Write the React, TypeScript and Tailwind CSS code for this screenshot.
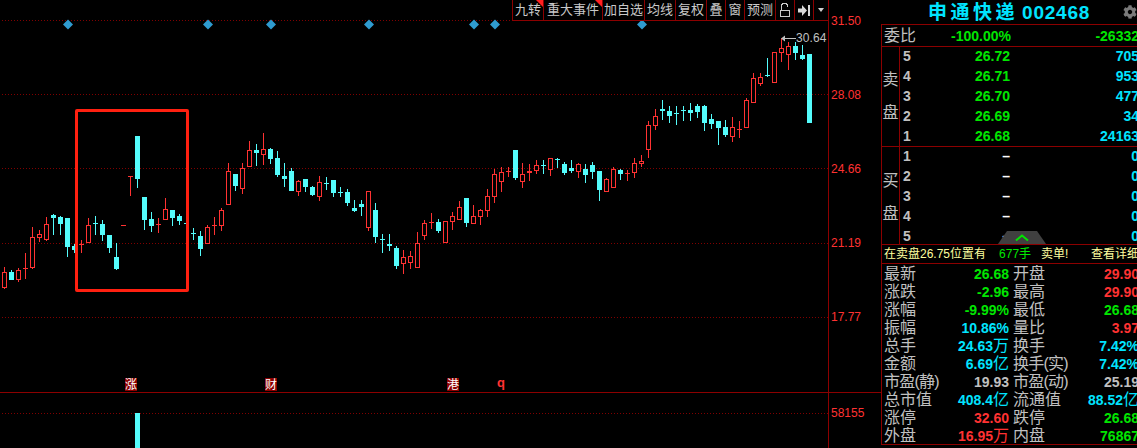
import { FaCog } from 'react-icons/fa'

const RED = '#ff3232'
const CYAN = '#54fcfc'

// kind, high, low, top, bottom — measured on 3x crops, y = origin + value / 3
type Raw = ['r' | 'c', number, number, number, number]

const toPixels = (origin: number, rows: Raw[]) =>
  rows.map(([kind, hi, lo, top, bot]) => ({
    kind,
    hi: Math.round(origin + hi / 3),
    lo: Math.round(origin + lo / 3),
    top: Math.round(origin + top / 3),
    bot: Math.round(origin + bot / 3),
  }))

const candles = [
  ...toPixels(100, [
    ['r', 502, 566, 517, 560], ['c', 511, 540, 516, 540], ['r', 505, 545, 511, 536], ['r', 460, 537, 505, 505],
    ['r', 381, 507, 412, 500], ['r', 391, 426, 403, 410], ['r', 351, 423, 373, 416], ['c', 343, 405, 345, 354],
    ['c', 348, 405, 351, 372], ['c', 354, 471, 354, 441], ['c', 432, 459, 438, 450], ['r', 420, 459, 433, 433],
    ['r', 354, 426, 376, 426], ['c', 348, 405, 370, 370], ['c', 360, 423, 372, 405], ['c', 405, 459, 405, 444],
    ['c', 429, 510, 471, 507], ['r', 376, 376, 376, 376], ['r', 229, 288, 229, 229], ['c', 108, 264, 108, 237],
    ['c', 291, 390, 291, 360], ['c', 336, 396, 357, 378], ['r', 354, 399, 373, 373], ['r', 294, 357, 328, 357],
    ['c', 330, 378, 330, 354], ['c', 342, 375, 348, 363], ['c', 370, 370, 370, 370], ['c', 384, 420, 399, 399],
    ['c', 393, 468, 408, 447], ['r', 376, 429, 382, 429], ['r', 351, 405, 376, 376], ['r', 324, 393, 331, 375],
    ['r', 189, 312, 214, 312], ['c', 222, 273, 222, 258], ['r', 189, 282, 205, 264], ['r', 123, 198, 151, 198],
    ['c', 132, 198, 150, 159],
  ]),
  ...toPixels(120, [
    ['r', 39, 135, 88, 101], ['c', 84, 132, 88, 117], ['c', 93, 171, 114, 165], ['c', 129, 201, 168, 177],
    ['c', 144, 213, 153, 213], ['r', 180, 228, 184, 212], ['c', 177, 216, 177, 201], ['c', 198, 228, 201, 225],
    ['r', 168, 243, 187, 228], ['c', 171, 210, 189, 189], ['c', 180, 231, 180, 219], ['c', 201, 231, 216, 216],
    ['c', 207, 258, 216, 249], ['c', 240, 276, 264, 273], ['c', 240, 288, 252, 261], ['r', 213, 333, 214, 320],
    ['c', 249, 369, 270, 351], ['c', 342, 399, 357, 357], ['c', 342, 393, 372, 378], ['c', 378, 447, 384, 438],
    ['r', 390, 462, 412, 429], ['r', 393, 447, 409, 425], ['r', 336, 441, 370, 441], ['r', 300, 360, 310, 344],
    ['r', 279, 327, 307, 307], ['c', 297, 339, 306, 333], ['r', 304, 365, 304, 365], ['r', 276, 330, 289, 302],
    ['r', 243, 300, 262, 296], ['c', 234, 321, 234, 309], ['r', 255, 312, 289, 309], ['r', 267, 315, 271, 287],
    ['r', 207, 291, 229, 269],
  ]),
  ...toPixels(90, [
    ['r', 237, 339, 253, 317], ['r', 231, 306, 247, 272], ['r', 231, 261, 244, 244], ['c', 180, 270, 180, 264],
    ['r', 219, 294, 253, 272], ['r', 222, 273, 243, 247], ['r', 210, 252, 226, 241], ['c', 210, 252, 226, 226],
    ['r', 203, 258, 205, 238], ['c', 204, 234, 207, 207], ['c', 216, 255, 222, 249], ['c', 210, 249, 234, 243],
    ['r', 220, 264, 223, 242], ['c', 222, 279, 237, 255], ['c', 216, 267, 225, 246], ['c', 243, 333, 243, 300],
    ['r', 264, 306, 268, 302], ['r', 231, 291, 238, 290], ['c', 237, 270, 240, 252], ['r', 240, 273, 250, 250],
    ['r', 204, 264, 220, 245], ['r', 195, 231, 213, 219], ['r', 93, 204, 106, 176], ['r', 57, 120, 79, 104],
    ['c', 30, 90, 57, 63], ['c', 48, 99, 63, 78], ['c', 48, 105, 70, 70], ['c', 48, 93, 61, 61],
    ['c', 39, 93, 60, 69], ['c', 42, 84, 48, 66], ['c', 45, 123, 48, 99], ['c', 72, 117, 87, 102],
    ['c', 93, 165, 93, 114], ['c', 90, 141, 111, 135], ['r', 81, 156, 112, 137], ['r', 93, 144, 118, 118],
    ['r', 24, 114, 30, 110],
  ]),
  ...toPixels(0, [
    ['r', 219, 307, 235, 305], ['r', 219, 258, 232, 248], ['c', 174, 231, 225, 225], ['r', 155, 246, 157, 245],
    ['r', 115, 186, 145, 155], ['r', 126, 210, 139, 163], ['c', 126, 180, 139, 159], ['c', 135, 180, 165, 177],
    ['c', 162, 369, 162, 369],
  ]),
]

const gridLines = [20.5, 94.5, 168.5, 243.5, 317.5]
const diamonds = [68, 208, 271, 369, 474, 495, 642]
const axisLabels = ['31.50', '28.08', '24.66', '21.19', '17.77']

function Candle({ index, c }: { index: number; c: (typeof candles)[number] }) {
  const x = 4 + index * 7
  const color = c.kind === 'r' ? RED : CYAN
  const flat = c.bot - c.top < 1

  return (
    <g>
      {c.lo > c.hi && <rect x={x} y={c.hi} width={1} height={c.lo - c.hi} fill={color} />}
      {flat ? (
        <rect x={x - 2} y={c.top} width={5} height={1} fill={color} />
      ) : c.kind === 'r' ? (
        <rect x={x - 1.5} y={c.top + 0.5} width={4} height={c.bot - c.top} fill="#000" stroke={color} />
      ) : (
        <rect x={x - 2} y={c.top} width={5} height={c.bot - c.top} fill={color} />
      )}
    </g>
  )
}

function KlineChart() {
  return (
    <svg width={828} height={392} className="block" shapeRendering="crispEdges">
      {gridLines.map(y => (
        <line key={y} x1={2} x2={828} y1={y} y2={y} stroke="#800000" strokeDasharray="1 2" />
      ))}
      {candles.map((c, i) => (
        <Candle key={i} index={i} c={c} />
      ))}
      {diamonds.map(x => (
        <polygon key={x} points={`${x},19.5 ${x + 5},24.5 ${x},29.5 ${x - 5},24.5`} fill="#2f9bd0" shapeRendering="auto" />
      ))}
      {/* highest price pointer */}
      <rect x={785} y={38} width={11} height={1} fill="#c0c0c0" />
      <polygon points="781,38.5 785,35.5 785,41.5" fill="#c0c0c0" shapeRendering="auto" />
    </svg>
  )
}

function Toolbar() {
  const textCell = 'relative flex h-full items-center justify-center border-r border-[#8c0000] text-[13px] text-[#c8c8c8]'
  const corner = 'absolute right-0 top-0 h-0 w-0 border-l-[7px] border-t-[7px] border-l-transparent border-t-[#ff2020]'

  return (
    <div className="absolute right-0 top-0 flex h-[21px] bg-black border-b border-l border-[#8c0000]">
      <div className={`${textCell} w-[31px]`}>
        九转
        <span className={corner} />
      </div>
      <div className={`${textCell} w-[59px]`}>
        重大事件
        <span className={corner} />
      </div>
      <div className={`${textCell} w-[42px]`}>加自选</div>
      <div className={`${textCell} w-[31px]`}>均线</div>
      <div className={`${textCell} w-[31px]`}>复权</div>
      <div className={`${textCell} w-[19px]`}>叠</div>
      <div className={`${textCell} w-[19px]`}>窗</div>
      <div className={`${textCell} w-[31px]`}>预测</div>
      <div className={`${textCell} w-[19px]`}>
        <svg width={12} height={16} viewBox="0 0 12 16" fill="none" stroke="#c8c8c8" shapeRendering="crispEdges">
          <path d="M1.5 8.5h9v6h-9z" />
          <path d="M2.5 8V3.5l1-2h4l1 2V5" />
        </svg>
      </div>
      <div className={`${textCell} w-[19px]`}>
        <svg width={13} height={11} viewBox="0 0 13 11" fill="#d8d8d8">
          <path d="M0 3.5h4V0l5 5.5-5 5.5V7.5H0z" />
          <path d="M10 0h2v11h-2z" />
        </svg>
      </div>
      <div className="flex h-full w-[14px] items-center justify-center">
        <span className="h-0 w-0 border-x-[3.5px] border-t-[4px] border-x-transparent border-t-[#d0d0d0]" />
      </div>
    </div>
  )
}

function EventTag({ label, left }: { label: string; left: string }) {
  return (
    <span className={`absolute top-[378px] flex h-[13px] w-[12px] items-center justify-center bg-[#8c0000] text-[12px] leading-none text-white ${left}`}>
      {label}
    </span>
  )
}

function LeftPane() {
  return (
    <div className="w-[881px] shrink-0">
      {/* kline */}
      <div className="flex h-[393px] border-b border-[#8c0000]">
        <div className="relative w-[829px] border-r border-[#8c0000]">
          <KlineChart />
          <Toolbar />
          <div className="absolute left-[75px] top-[109px] h-[183px] w-[114px] rounded-[2px] border-[3px] border-[#ff2010]" />
          <span className="absolute left-[796px] top-[31px] text-[12px] leading-[14px] tracking-[0.1px] text-[#c0c0c0]">30.64</span>
          <EventTag label="涨" left="left-[125px]" />
          <EventTag label="财" left="left-[265px]" />
          <EventTag label="港" left="left-[447px]" />
          <span className="absolute left-[497px] top-[376px] text-[13px] font-bold leading-[14px] text-[#ff3232]">q</span>
        </div>
        <div className="flex flex-col gap-[60px] pl-[2px] pt-[14px] text-[12px] leading-[14px] text-[#ff3232]">
          {axisLabels.map(label => (
            <span key={label}>{label}</span>
          ))}
        </div>
      </div>

      {/* volume */}
      <div className="flex h-[55px]">
        <div className="w-[829px] border-r border-[#8c0000]">
          <svg width={828} height={55} className="block" shapeRendering="crispEdges">
            <line x1={2} x2={828} y1={20.5} y2={20.5} stroke="#800000" strokeDasharray="1 2" />
            <rect x={135} y={20} width={5} height={35} fill={CYAN} />
          </svg>
        </div>
        <span className="pl-[2px] pt-[13px] text-[12px] leading-[14px] text-[#ff3232]">58155</span>
      </div>
    </div>
  )
}

function QuoteRow({ level, price, volume }: { level: number; price: string; volume: string }) {
  return (
    <div className="flex h-[20px] items-center">
      <span className="w-[24px] pl-[3px] text-[#c0c0c0]">{level}</span>
      <span className={`w-[86px] text-right ${price === '–' ? 'text-white' : 'text-[#00e600]'}`}>{price}</span>
      <span className="flex-1 text-right text-[#00e4ff]">{volume}</span>
    </div>
  )
}

function SideLabel({ chars, className = '' }: { chars: string[]; className?: string }) {
  return (
    <div className={`flex w-[18px] shrink-0 flex-col items-center justify-center gap-[15px] border-r border-[#8c0000] text-[16px] font-normal leading-[18px] text-[#c0c0c0] ${className}`}>
      {chars.map(ch => (
        <span key={ch}>{ch}</span>
      ))}
    </div>
  )
}

function StatLabel({ text }: { text: string }) {
  return (
    <span className={`text-[16px] font-normal text-[#c0c0c0] ${text.includes('(') ? 'tracking-[-0.8px]' : ''}`}>
      {text}
    </span>
  )
}

// the 万 / 亿 unit is drawn larger and thinner than the digits
function StatValue({ value, color }: { value: string; color: string }) {
  const unit = value.match(/[万亿]$/)?.[0]
  return (
    <span className={`flex items-center ${color}`}>
      {unit ? value.slice(0, -1) : value}
      {unit && <span className="text-[16px] font-normal">{unit}</span>}
    </span>
  )
}

const sellRows = [
  { level: 5, price: '26.72', volume: '705' },
  { level: 4, price: '26.71', volume: '953' },
  { level: 3, price: '26.70', volume: '477' },
  { level: 2, price: '26.69', volume: '34' },
  { level: 1, price: '26.68', volume: '24163' },
]

const buyRows = [1, 2, 3, 4, 5].map(level => ({ level, price: '–', volume: '0' }))

const G = 'text-[#00e600]'
const R = 'text-[#ff3232]'
const C = 'text-[#00e4ff]'
const W = 'text-[#c0c0c0]'

const stats: [string, string, string, string, string, string][] = [
  ['最新', '26.68', G, '开盘', '29.90', R],
  ['涨跌', '-2.96', G, '最高', '29.90', R],
  ['涨幅', '-9.99%', G, '最低', '26.68', G],
  ['振幅', '10.86%', C, '量比', '3.97', R],
  ['总手', '24.63万', C, '换手', '7.42%', C],
  ['金额', '6.69亿', C, '换手(实)', '7.42%', C],
  ['市盈(静)', '19.93', W, '市盈(动)', '25.19', W],
  ['总市值', '408.4亿', C, '流通值', '88.52亿', C],
  ['涨停', '32.60', R, '跌停', '26.68', G],
  ['外盘', '16.95万', R, '内盘', '76867', G],
]

function QuotePanel() {
  return (
    <div className="relative w-[258px] shrink-0 text-[14px] font-bold leading-none">
      {/* title */}
      <div className="relative flex h-[24px] items-center pl-[47px] text-[19px] text-[#00e4ff]">
        <span className="tracking-[3.5px]">申通快递</span>
        <span className="ml-[4px] tracking-[0.8px]">002468</span>
        <FaCog className="absolute left-[242px] top-[5px] text-[#7a7a7a]" size={14} />
      </div>

      <div className="h-[421px] border-y border-l border-[#8c0000]">
        {/* committee ratio */}
        <div className="flex h-[21px] items-center">
          <span className="w-[34px] pl-[2px] text-[16px] font-normal text-[#c0c0c0]">委比</span>
          <span className="w-[95px] text-right text-[#00e600]">-100.00%</span>
          <span className="flex-1 text-right text-[#00e600]">-26332</span>
        </div>

        {/* sell */}
        <div className="flex h-[100px] border-t border-[#8c0000]">
          <SideLabel chars={['卖', '盘']} />
          <div className="-mt-px flex-1">
            {sellRows.map(row => (
              <QuoteRow key={row.level} {...row} />
            ))}
          </div>
        </div>

        {/* buy */}
        <div className="relative flex h-[98px] border-t border-[#8c0000]">
          <SideLabel chars={['买', '盘']} className="pt-[4px]" />
          <div className="-mt-px flex-1">
            {buyRows.map(row => (
              <QuoteRow key={row.level} {...row} />
            ))}
          </div>
          <svg width={48} height={13} className="absolute bottom-0 left-[116px]" viewBox="0 0 48 13">
            <path d="M9 0h30l9 13H0z" fill="#404040" />
            <path d="M18 9.5l6-5 6 5" fill="none" stroke="#00e600" strokeWidth={2} />
          </svg>
        </div>

        {/* big order notice */}
        <div className="flex h-[19px] items-center whitespace-nowrap border-t border-[#8c0000] pl-[2px] text-[12px] font-normal text-[#ffff9f]">
          <span>在卖盘26.75位置有</span>
          <span className="ml-[13px] text-[#00e600]">677手</span>
          <span className="ml-[10px]">卖单!</span>
          <span className="ml-auto">查看详细</span>
        </div>

        {/* stats */}
        <div className="border-t border-[#8c0000] pt-px">
          {stats.map(([l1, v1, c1, l2, v2, c2]) => (
            <div key={l1} className="flex h-[18px] items-center whitespace-nowrap">
              <div className="flex w-[127px] items-center justify-between pl-[2px]">
                <StatLabel text={l1} />
                <StatValue value={v1} color={c1} />
              </div>
              <div className="ml-[4px] flex flex-1 items-center justify-between">
                <StatLabel text={l2} />
                <StatValue value={v2} color={c2} />
              </div>
            </div>
          ))}
        </div>
      </div>
    </div>
  )
}

export default function App() {
  return (
    <div className="flex h-[448px] w-[1137px] overflow-hidden bg-black font-['Liberation_Sans','Noto_Sans_CJK_SC',sans-serif]">
      <LeftPane />
      <QuotePanel />
    </div>
  )
}
